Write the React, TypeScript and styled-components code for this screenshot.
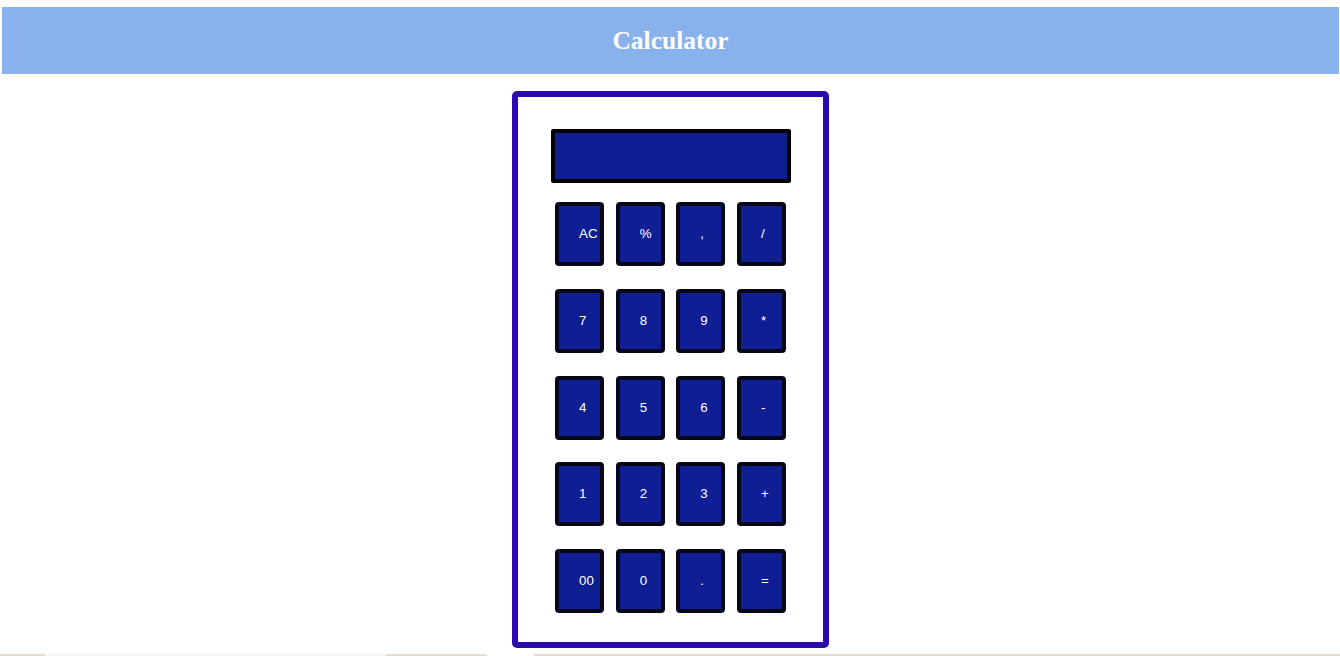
import React from "react";
import styled, { createGlobalStyle } from "styled-components";

const GlobalStyle = createGlobalStyle`
  html, body {
    margin: 0;
    padding: 0;
    background: #ffffff;
  }
  body {
    font-family: "Liberation Serif", "Times New Roman", serif;
  }
`;

const Page = styled.div`
  padding: 7px 1px 0 2px;
  display: flex;
  flex-direction: column;
  align-items: stretch;
`;

const Header = styled.header`
  height: 67px;
  background: #89b1eb;
  display: flex;
  align-items: center;
  justify-content: center;
`;

const Title = styled.h1`
  margin: 0;
  font-family: "Liberation Serif", "Times New Roman", serif;
  font-weight: bold;
  font-size: 25.5px;
  color: #ffffff;
`;

const Main = styled.main`
  display: flex;
  justify-content: center;
  padding-top: 17px;
`;

const Frame = styled.div`
  width: 305px;
  box-sizing: content-box;
  border: 6px solid #2c0aad;
  border-radius: 5px;
  padding: 32px 0 29px;
  display: flex;
  flex-direction: column;
  align-items: center;
  gap: 19px;
`;

const Display = styled.div`
  width: 240px;
  height: 54px;
  box-sizing: border-box;
  border: 4px solid #000000;
  border-radius: 2px;
  background: #0f1e93;
`;

const Keys = styled.div`
  display: grid;
  grid-template-columns: repeat(4, 49px);
  grid-auto-rows: 64px;
  column-gap: 11.67px;
  row-gap: 22.75px;
`;

const Key = styled.button`
  box-sizing: border-box;
  width: 49px;
  height: 64px;
  margin: 0;
  padding: 0 0 1px 20px;
  border: 4px solid #07071a;
  border-radius: 4px;
  background: #0f1e93;
  color: #ffffff;
  font-family: "Liberation Sans", Arial, sans-serif;
  font-size: 13.33px;
  text-align: left;
  white-space: nowrap;
  cursor: pointer;
`;

const Footer = styled.div`
  margin-top: 6px;
  height: 3px;
  margin-left: -2px;
  margin-right: -1px;
  display: flex;
  background: #e4dbd2;
`;

const FooterPiece = styled.div<{ $w: number; $c: string }>`
  width: ${(p) => p.$w}px;
  background: ${(p) => p.$c};
`;

const keys = [
  "AC", "%", ",", "/",
  "7", "8", "9", "*",
  "4", "5", "6", "-",
  "1", "2", "3", "+",
  "00", "0", ".", "=",
];

export default function App() {
  return (
    <>
      <GlobalStyle />
      <Page>
        <Header>
          <Title>Calculator</Title>
        </Header>
        <Main>
          <Frame>
            <Display />
            <Keys>
              {keys.map((k, i) => (
                <Key key={i}>{k}</Key>
              ))}
            </Keys>
          </Frame>
        </Main>
        <Footer>
          <FooterPiece $w={45} $c="#e4dbd2" />
          <FooterPiece $w={341} $c="#f4f4f4" />
          <FooterPiece $w={101} $c="#e4dbd2" />
          <FooterPiece $w={47} $c="#ffffff" />
        </Footer>
      </Page>
    </>
  );
}
